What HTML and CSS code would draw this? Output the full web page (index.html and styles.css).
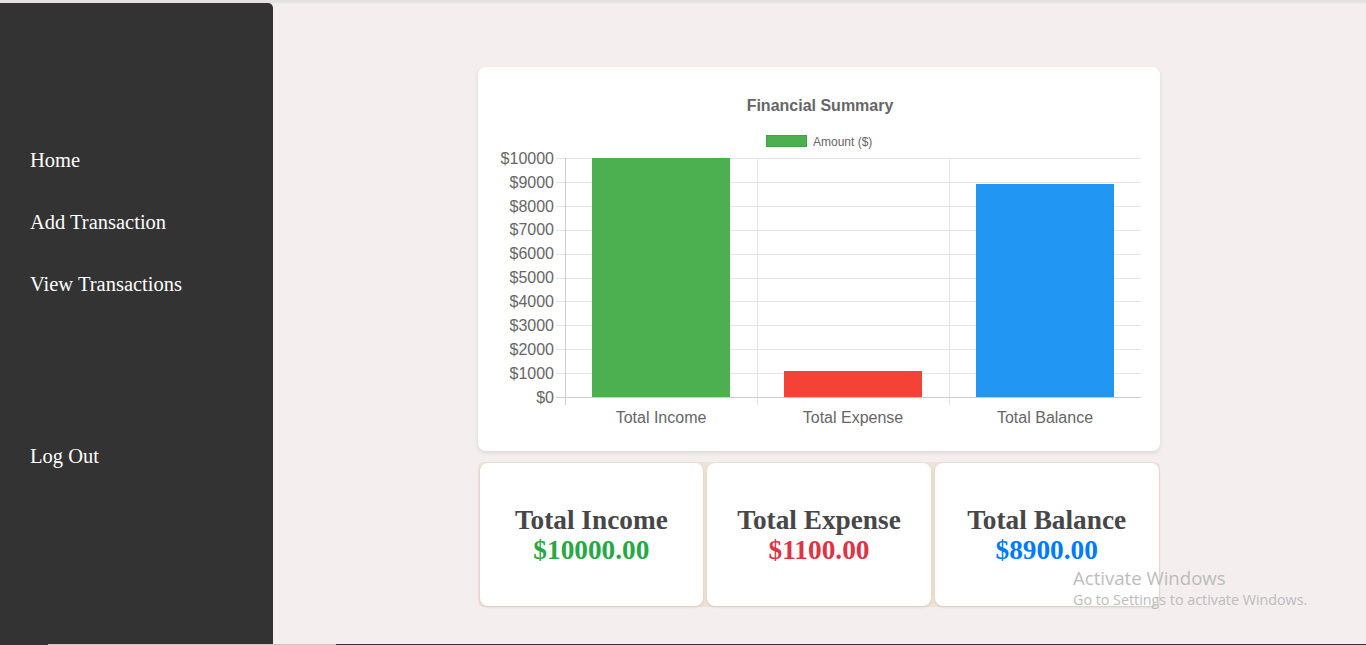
FILE: index.html
```html
<!DOCTYPE html>
<html lang="en">
<head>
<meta charset="utf-8">
<title>Financial Summary</title>
<link rel="stylesheet" href="styles.css">
</head>
<body>
<div class="top-strip"></div>
<div class="layout">
  <aside class="sidebar">
    <nav class="nav">
      <a class="nav-link" href="#">Home</a>
      <a class="nav-link" href="#">Add Transaction</a>
      <a class="nav-link" href="#">View Transactions</a>
    </nav>
    <a class="nav-link logout" href="#">Log Out</a>
  </aside>
  <main class="main">
    <section class="chart-card">
      <svg class="chart" width="682" height="384" viewBox="0 0 682 384" xmlns="http://www.w3.org/2000/svg">
        <text x="342" y="43.7" text-anchor="middle" class="c-title">Financial Summary</text>
        <rect x="288.5" y="68.5" width="40" height="11" fill="#4caf50" stroke="#43a047" stroke-width="1"/>
        <text x="335" y="78.5" class="c-legend">Amount ($)</text>
        <g class="grid" shape-rendering="crispEdges">
          <line x1="78" x2="663" y1="91" y2="91"/>
          <line x1="78" x2="663" y1="115" y2="115"/>
          <line x1="78" x2="663" y1="139" y2="139"/>
          <line x1="78" x2="663" y1="163" y2="163"/>
          <line x1="78" x2="663" y1="187" y2="187"/>
          <line x1="78" x2="663" y1="211" y2="211"/>
          <line x1="78" x2="663" y1="234" y2="234"/>
          <line x1="78" x2="663" y1="258" y2="258"/>
          <line x1="78" x2="663" y1="282" y2="282"/>
          <line x1="78" x2="663" y1="306" y2="306"/>
          <line x1="279" x2="279" y1="91" y2="338"/>
          <line x1="471" x2="471" y1="91" y2="338"/>
        </g>
        <g shape-rendering="crispEdges">
          <rect x="114" y="91" width="138" height="239" fill="#4caf50"/>
          <rect x="306" y="304" width="138" height="26" fill="#f44336"/>
          <rect x="498" y="117" width="138" height="213" fill="#2196f3"/>
        </g>
        <g class="axis" shape-rendering="crispEdges">
          <line x1="78" x2="663" y1="330" y2="330"/>
          <line x1="87" x2="87" y1="91" y2="338"/>
        </g>
        <g class="c-ylabels" text-anchor="end">
          <text x="76" y="96.7">$10000</text>
          <text x="76" y="120.6">$9000</text>
          <text x="76" y="144.5">$8000</text>
          <text x="76" y="168.4">$7000</text>
          <text x="76" y="192.3">$6000</text>
          <text x="76" y="216.2">$5000</text>
          <text x="76" y="240.1">$4000</text>
          <text x="76" y="264">$3000</text>
          <text x="76" y="287.9">$2000</text>
          <text x="76" y="311.8">$1000</text>
          <text x="76" y="335.7">$0</text>
        </g>
        <g class="c-xlabels" text-anchor="middle">
          <text x="183" y="355.7">Total Income</text>
          <text x="375" y="355.7">Total Expense</text>
          <text x="567" y="355.7">Total Balance</text>
        </g>
      </svg>
    </section>
    <section class="summary-row">
      <div class="summary-card">
        <div class="summary-title">Total Income</div>
        <div class="summary-value income">$10000.00</div>
      </div>
      <div class="summary-card">
        <div class="summary-title">Total Expense</div>
        <div class="summary-value expense">$1100.00</div>
      </div>
      <div class="summary-card">
        <div class="summary-title">Total Balance</div>
        <div class="summary-value balance">$8900.00</div>
      </div>
    </section>
  </main>
</div>
<div class="bottom-strip"><span class="bs-dark"></span><span class="bs-grey"></span><span class="bs-dark bs-rest"></span></div>
<div class="watermark">
  <div class="wm-title">Activate Windows</div>
  <div class="wm-sub">Go to Settings to activate Windows.</div>
</div>
</body>
</html>
```
FILE: styles.css
```css
html, body {
  margin: 0;
  padding: 0;
}
body {
  width: 1366px;
  height: 645px;
  overflow: hidden;
  background: #f4eeee;
  font-family: "Liberation Serif", "Times New Roman", serif;
  position: relative;
}
.top-strip {
  height: 3px;
  background: #e4e2e2;
}
.layout {
  display: flex;
  height: 641px;
}
.sidebar {
  width: 273px;
  flex: 0 0 273px;
  background: #333333;
  border-top-right-radius: 5px;
  box-sizing: border-box;
  padding: 146px 0 0 30px;
  display: flex;
  flex-direction: column;
}
.nav {
  display: flex;
  flex-direction: column;
  gap: 39px;
}
.nav-link {
  display: block;
  color: #ffffff;
  text-decoration: none;
  font-size: 20.5px;
  line-height: 23px;
}
.logout {
  margin-top: 148.5px;
}
.main {
  flex: 1;
  display: flex;
  flex-direction: column;
  align-items: center;
  padding-top: 64px;
  padding-right: 1px;
  box-sizing: border-box;
}
.chart-card {
  width: 682px;
  height: 384px;
  background: #ffffff;
  border-radius: 8px;
  box-shadow: 0 2px 4px rgba(0, 0, 0, 0.1);
}
.chart {
  display: block;
  font-family: "Liberation Sans", Arial, sans-serif;
}
.c-title {
  font-size: 16px;
  font-weight: bold;
  fill: #666666;
}
.c-legend {
  font-size: 12px;
  fill: #666666;
}
.c-ylabels, .c-xlabels {
  font-size: 16px;
  fill: #666666;
}
.grid line {
  stroke: #e5e5e5;
  stroke-width: 1;
}
.axis line {
  stroke: #cccccc;
  stroke-width: 1;
}
.summary-row {
  margin-top: 11px;
  width: 682px;
  box-sizing: border-box;
  padding: 1px 1.5px;
  display: flex;
  gap: 4px;
  background: #f0e3d5;
  border-radius: 6px;
}
.summary-card {
  flex: 1;
  height: 143px;
  background: #ffffff;
  border-radius: 8px;
  box-shadow: 0 1px 3px rgba(0, 0, 0, 0.12);
  display: flex;
  flex-direction: column;
  justify-content: center;
  align-items: center;
  font-weight: bold;
  font-size: 27.3px;
  line-height: 30px;
}
.summary-title {
  color: #474749;
}
.income { color: #28a745; }
.expense { color: #dc3545; }
.balance { color: #007bff; }
.bottom-strip {
  height: 1px;
  display: flex;
}
.bs-dark {
  width: 48px;
  background: #2a3838;
}
.bs-grey {
  width: 288px;
  background: #c6c6c6;
}
.bs-rest {
  flex: 1;
}
.watermark {
  position: absolute;
  left: 1073px;
  top: 566px;
  font-family: "Open Sans", "Noto Sans", sans-serif;
  color: #bcbcbc;
  pointer-events: none;
}
.wm-title {
  font-size: 18.6px;
  line-height: 24px;
}
.wm-sub {
  font-size: 14.3px;
  line-height: 20px;
}
```
